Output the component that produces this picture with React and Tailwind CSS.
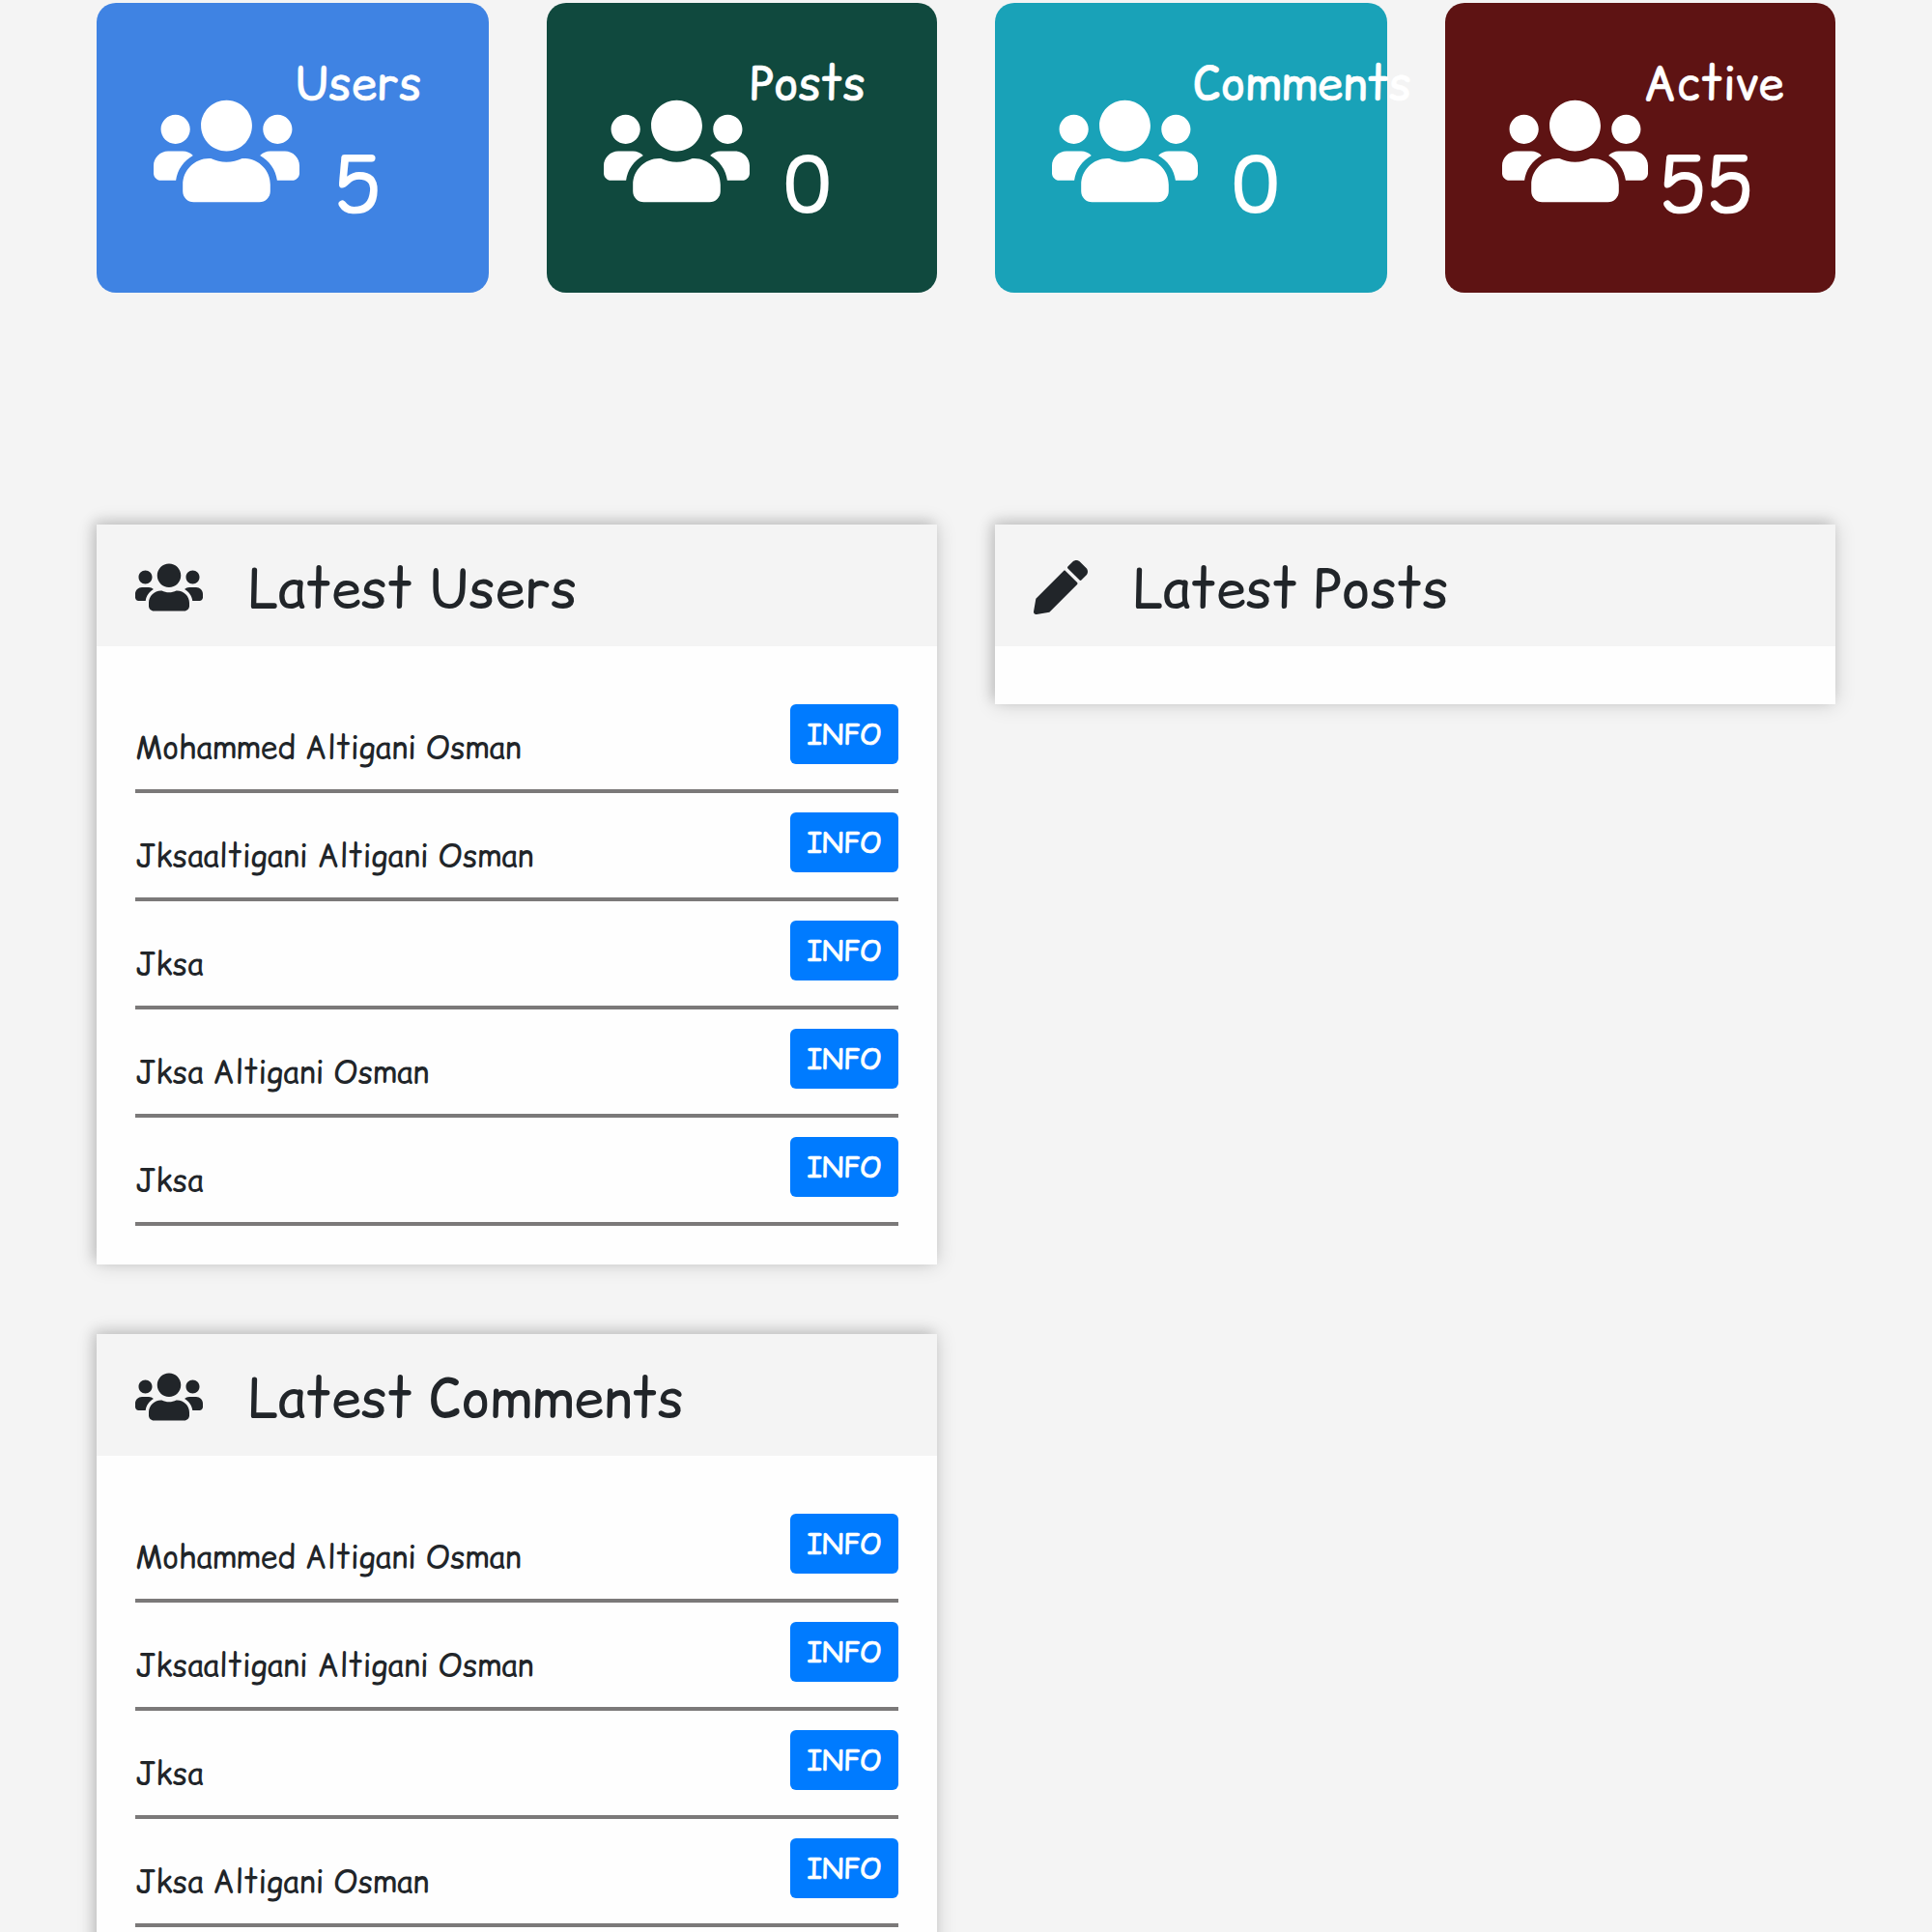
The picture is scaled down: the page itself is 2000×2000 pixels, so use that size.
import { FaUsers } from "react-icons/fa";

const stats = [
  { label: "Users", value: "5", color: "bg-[#3f83e3]", width: "w-[406px]" },
  { label: "Posts", value: "0", color: "bg-[#10493e]", width: "w-[404px]" },
  { label: "Comments", value: "0", color: "bg-[#19a2b8]", width: "w-[406px]" },
  { label: "Active", value: "55", color: "bg-[#5e1313]", width: "w-[404px]" },
];

const people = [
  "Mohammed Altigani Osman",
  "Jksaaltigani Altigani Osman",
  "Jksa",
  "Jksa Altigani Osman",
  "Jksa",
];

function PencilIcon({ className }) {
  return (
    <svg viewBox="0 0 512 512" fill="currentColor" className={className}>
      <path d="M497.9 142.1l-46.1 46.1c-4.7 4.7-12.3 4.7-17 0l-111-111c-4.7-4.7-4.7-12.3 0-17l46.1-46.1c18.7-18.7 49.1-18.7 67.9 0l60.1 60.1c18.8 18.7 18.8 49.1 0 67.9zM284.2 99.8L21.6 362.4.4 483.9c-2.9 16.4 11.4 30.6 27.8 27.8l121.5-21.3 262.6-262.6c4.7-4.7 4.7-12.3 0-17l-111-111c-4.8-4.7-12.4-4.7-17.1 0z" />
    </svg>
  );
}

function StatCard({ label, value, color, width }) {
  return (
    <div className={`flex h-[300px] justify-start rounded-[20px] text-white ${width} ${color}`}>
      <FaUsers className="mt-[93px] ml-[59px] h-[121px] w-[151px] shrink-0" />
      <div className="-ml-[5px] w-[130px] pt-[48px]">
        <div className="h-[70px] text-center text-[48px] leading-[70px] whitespace-nowrap [-webkit-text-stroke:0.5px]">{label}</div>
        <div className="mt-[14px] h-[112px] text-center text-[80px] leading-[112px]">{value}</div>
      </div>
    </div>
  );
}

function Panel({ title, icon, names = [] }) {
  return (
    <section className="w-[870px] bg-[#fefefe] shadow-[-4px_-4px_12px_rgba(0,0,0,0.12),0_0_20px_rgba(0,0,0,0.16)]">
      <header className="flex h-[126px] items-center bg-[#f4f4f4] pt-1 pl-10">
        {icon}
        <h2 className="pt-0.5 text-[56px] leading-[72px]">{title}</h2>
      </header>
      <ul className="pt-5 pb-10">
        {names.map((name, i) => (
          <li key={i} className="mx-10 flex h-[112px] justify-between border-b-4 border-[#7b7979] first:h-[132px] first:pt-5">
            <span className="pt-[41px] text-[32px] leading-[48px]">{name}</span>
            <button className="mt-5 h-[62px] w-[112px] rounded-[6px] bg-[#007bff] text-[28px] text-white [-webkit-text-stroke:0.7px]">INFO</button>
          </li>
        ))}
      </ul>
    </section>
  );
}

export default function App() {
  return (
    <main className="h-[2000px] w-[2000px] overflow-hidden bg-[#f4f4f4] px-[100px] pt-[3px] font-['Comic_Relief','Comic_Neue',cursive] text-[#212529]">
      <div className="flex justify-between">
        {stats.map((s) => (
          <StatCard key={s.label} {...s} />
        ))}
      </div>
      <div className="mt-[240px] flex items-start gap-[60px]">
        <div className="flex flex-col gap-[72px]">
          <Panel title="Latest Users" icon={<FaUsers className="mr-[47px] h-[56px] w-[70px]" />} names={people} />
          <Panel title="Latest Comments" icon={<FaUsers className="mr-[47px] h-[56px] w-[70px]" />} names={people} />
        </div>
        <Panel title="Latest Posts" icon={<PencilIcon className="mr-[47px] h-[56px] w-[56px]" />} />
      </div>
    </main>
  );
}
